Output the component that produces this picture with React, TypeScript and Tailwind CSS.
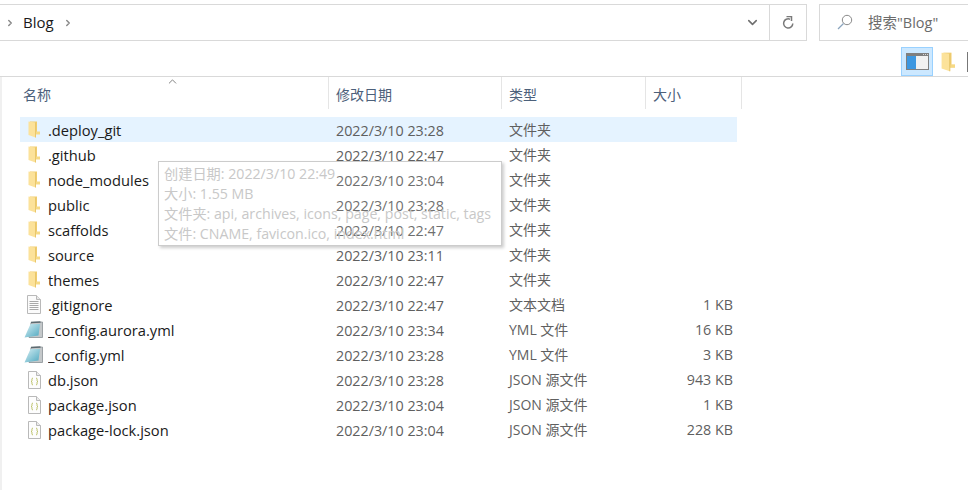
import { ChevronDown, ChevronRight, ChevronUp } from "lucide-react";

type FileRow = {
  name: string;
  date: string;
  type: string;
  size?: string;
  icon: "folder" | "text" | "yml" | "json";
};

const rows: FileRow[] = [
  { name: ".deploy_git", date: "2022/3/10 23:28", type: "文件夹", icon: "folder" },
  { name: ".github", date: "2022/3/10 22:47", type: "文件夹", icon: "folder" },
  { name: "node_modules", date: "2022/3/10 23:04", type: "文件夹", icon: "folder" },
  { name: "public", date: "2022/3/10 23:28", type: "文件夹", icon: "folder" },
  { name: "scaffolds", date: "2022/3/10 22:47", type: "文件夹", icon: "folder" },
  { name: "source", date: "2022/3/10 23:11", type: "文件夹", icon: "folder" },
  { name: "themes", date: "2022/3/10 22:47", type: "文件夹", icon: "folder" },
  { name: ".gitignore", date: "2022/3/10 22:47", type: "文本文档", size: "1 KB", icon: "text" },
  { name: "_config.aurora.yml", date: "2022/3/10 23:34", type: "YML 文件", size: "16 KB", icon: "yml" },
  { name: "_config.yml", date: "2022/3/10 23:28", type: "YML 文件", size: "3 KB", icon: "yml" },
  { name: "db.json", date: "2022/3/10 23:28", type: "JSON 源文件", size: "943 KB", icon: "json" },
  { name: "package.json", date: "2022/3/10 23:04", type: "JSON 源文件", size: "1 KB", icon: "json" },
  { name: "package-lock.json", date: "2022/3/10 23:04", type: "JSON 源文件", size: "228 KB", icon: "json" },
];

function FolderIcon({ width = 12, height = 17 }: { width?: number; height?: number }) {
  return (
    <svg width={width} height={height} viewBox="0 0 12 17">
      <path d="M2 0.500h7v12H2z" fill="#f0cc6e" />
      <path d="M0.500 0.500 L7.500 1.500 V16.500 L0.500 14z" fill="#fce29a" />
      <path d="M7.500 10.500H12v3H7.500z" fill="#f6d985" />
      <path d="M7.500 1.500V16.500" stroke="#e8c76c" />
    </svg>
  );
}

function TextIcon() {
  return (
    <svg width="14" height="19" viewBox="0 0 14 19">
      <path d="M0.500 0.500h9l4 4v14h-13z" fill="#fbfbfb" stroke="#b9b9b9" />
      <path d="M9.500 0.500v4h4" fill="#e8e8e8" stroke="#b9b9b9" />
      <path d="M2.500 6.500h9M2.500 8.500h9M2.500 10.500h9M2.500 12.500h9M2.500 14.500h9" stroke="#a8a8a8" />
    </svg>
  );
}

function YmlIcon() {
  return (
    <svg width="20" height="18" viewBox="0 0 20 18">
      <defs>
        <linearGradient id="yml-page" x1="0" y1="0" x2="1" y2="1">
          <stop offset="0" stopColor="#d6eef3" />
          <stop offset="1" stopColor="#4ea8c0" />
        </linearGradient>
      </defs>
      <path d="M7 1.500 L18.500 1 V16.500 H5z" fill="#c4c8ca" stroke="#8a9296" strokeWidth="0.800" />
      <path d="M6.500 3 H16 L14.500 14.500 L0.500 16.500z" fill="url(#yml-page)" />
      <path d="M7 1.500 L16.500 1" stroke="#5c6a70" strokeWidth="1.500" />
    </svg>
  );
}

function JsonIcon() {
  return (
    <svg width="13" height="18" viewBox="0 0 13 18">
      <path d="M0.500 0.500h8l4 4v13h-12z" fill="#fdfdfd" stroke="#b9b9b9" />
      <path d="M8.500 0.500v4h4" fill="#ececec" stroke="#b9b9b9" />
      <path d="M5 7c-1.500 0-1 2.500-1 3s-1 .5-1 .5 1 0 1 .5-.5 3 1 3M8 7c1.500 0 1 2.500 1 3s1 .5 1 .5-1 0-1 .5.5 3-1 3" fill="none" stroke="#b9bf62" />
    </svg>
  );
}

function RowIcon({ icon }: { icon: FileRow["icon"] }) {
  if (icon === "folder") return <FolderIcon />;
  if (icon === "text") return <TextIcon />;
  if (icon === "yml") return <YmlIcon />;
  return <JsonIcon />;
}

function PaneToggleIcon() {
  return (
    <svg width="23" height="17" viewBox="0 0 23 17">
      <path d="M0 0h23v17H0z" fill="#7f7f7f" />
      <path d="M1 3h9v13H1z" fill="#3d97e0" />
      <path d="M10 3h12v13H10z" fill="#f1f1f1" />
      <path d="M17 1h1v1h-1zM19 1h1v1h-1zM21 1h1v1h-1z" fill="#d8d8d8" />
    </svg>
  );
}

function RefreshIcon() {
  return (
    <svg width="12" height="14" viewBox="0 0 12 14" fill="none">
      <path d="M8 3.200A4.600 4.600 0 1 0 10.800 7.500" stroke="#7a7a7a" strokeWidth="1.500" />
      <path d="M4.500 0.500h5v4.500" stroke="#7a7a7a" strokeWidth="1.500" />
    </svg>
  );
}

function SearchIcon() {
  return (
    <svg width="16" height="16" viewBox="0 0 16 16" fill="none">
      <circle cx="10" cy="6" r="4.700" stroke="#8a8a8a" />
      <path d="M6.500 9.500 L1 15" stroke="#8aa4bd" strokeWidth="1.300" />
    </svg>
  );
}

function HeaderCell({ label, className }: { label: string; className: string }) {
  return (
    <div className={`h-full flex items-center border-r border-[#e5e5e5] ${className}`}>
      <span className="mt-[2px]">{label}</span>
    </div>
  );
}

export default function App() {
  return (
    <div
      className="relative w-[968px] h-[490px] overflow-hidden bg-white text-[14.500px] text-[#1a1a1a]"
      style={{ fontFamily: '"Open Sans", "Noto Sans CJK SC", sans-serif' }}
    >
      {/* address + search */}
      <div className="flex h-[37px] mt-[4px]">
        <div className="w-[807px] flex items-center border-y border-r border-[#d9d9d9]">
          <ChevronRight size={10} strokeWidth={3.500} className="ml-[5px] text-[#8a8a8a]" />
          <span className="ml-[8px] text-[15px]">Blog</span>
          <ChevronRight size={10} strokeWidth={3.500} className="ml-[9px] text-[#8a8a8a]" />
          <div className="grow" />
          <ChevronDown size={15} strokeWidth={2.500} className="mr-[9px] text-[#6f6f6f]" />
          <div className="w-[37px] h-full flex items-center justify-center border-l border-[#d9d9d9]">
            <RefreshIcon />
          </div>
        </div>
        <div className="ml-[12px] grow flex items-center border-y border-l border-[#d9d9d9] text-[#6b6b6b]">
          <div className="ml-[17px] mb-[1px]">
            <SearchIcon />
          </div>
          <span className="ml-[15px]">搜索"Blog"</span>
        </div>
      </div>

      {/* view toggle */}
      <div className="h-[36px] flex items-end justify-end border-b border-[#d9d9d9]">
        <div className="w-[32px] h-[29px] flex items-center justify-center bg-[#cce8ff] border border-[#99d1ff]">
          <PaneToggleIcon />
        </div>
        <div className="ml-[8px] mb-[4px]">
          <FolderIcon width={14} height={20} />
        </div>
        <div className="ml-[12px] mb-[4px] w-[1px] h-[20px] bg-[#777777]" />
      </div>

      {/* details list */}
      <div className="h-[413px] border-l-2 border-[#f0f0f0]">
        <div className="relative flex h-[32px] text-[#4c607a] text-[14px]">
          <ChevronUp size={13} strokeWidth={1.500} className="absolute left-[164px] -top-[2px] text-[#666666]" />
          <HeaderCell label="名称" className="w-[327px] pl-[21px]" />
          <HeaderCell label="修改日期" className="w-[173px] pl-[7px]" />
          <HeaderCell label="类型" className="w-[144px] pl-[7px]" />
          <HeaderCell label="大小" className="w-[96px] pl-[7px]" />
        </div>
        <div className="mt-[8px] ml-[18px] w-[717px]">
          {rows.map((row, i) => (
            <div key={row.name} className={`flex items-center h-[25px] ${i === 0 ? "bg-[#e5f3ff]" : ""}`}>
              <div className="w-[28px] h-full flex items-center justify-center">
                <RowIcon icon={row.icon} />
              </div>
              <div className="w-[288px] truncate mt-[2px] text-[14.700px]">{row.name}</div>
              <div className="w-[173px] text-[14.300px] text-[#5f5f5f] mt-[3px]">{row.date}</div>
              <div className="w-[144px] text-[14px] text-[#5f5f5f]">{row.type}</div>
              <div className="w-[80px] text-[14.300px] text-right text-[#5f5f5f] mt-[1px]">{row.size}</div>
            </div>
          ))}
        </div>
      </div>

      {/* hover tooltip, fading in over the list */}
      <div className="absolute left-[158px] top-[161px] w-[344px] h-[85px] pl-[5px] pt-[2px] bg-white/10 border border-[#cccccc] shadow-[2px_2px_3px_rgba(0,0,0,0.2)] text-[#c8c8c8] text-[14.200px] leading-[20px]">
        <div>创建日期: 2022/3/10 22:49</div>
        <div>大小: 1.55 MB</div>
        <div className="whitespace-nowrap">文件夹: api, archives, icons, page, post, static, tags</div>
        <div>文件: CNAME, favicon.ico, index.html</div>
      </div>
    </div>
  );
}
